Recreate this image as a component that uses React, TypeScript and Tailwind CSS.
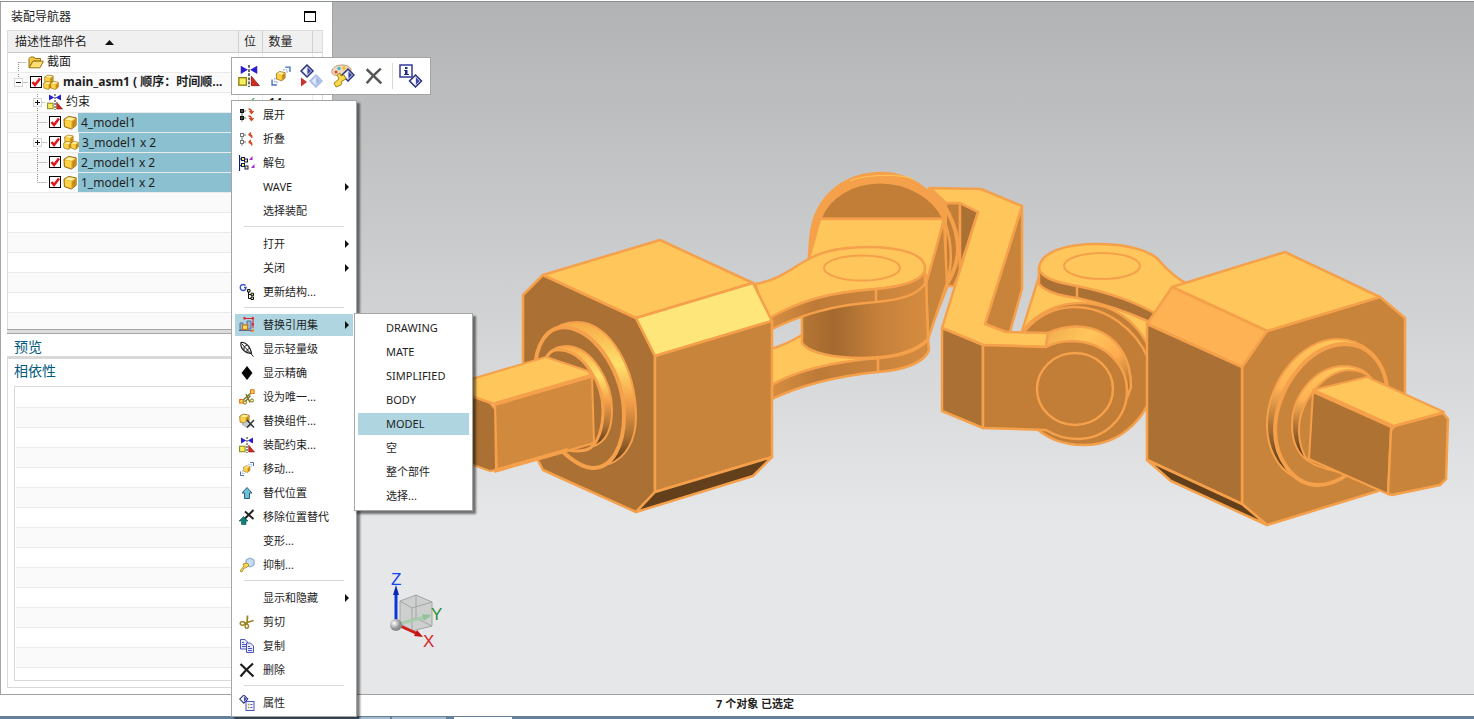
import type { ReactNode } from "react";

interface IconProps {
  className?: string;
}

interface MenuEntry {
  label: string;
  icon?: ReactNode;
  arrow?: boolean;
  active?: boolean;
}

interface TreeRow {
  label: string;
  indent: "root" | "asm" | "group" | "part";
  icon: ReactNode;
  toggle?: "+" | "-";
  checkable?: boolean;
  selected?: boolean;
  bold?: boolean;
  count?: string;
  last?: boolean;
}

/* ---------- icons ---------- */

function Cube({ x = 0, y = 0, s = 1 }: { x?: number; y?: number; s?: number }) {
  return (
    <g transform={`translate(${x} ${y}) scale(${s})`}>
      <path d="M1 4.5 6 1.5 14 3 14 11 9 15 1.5 12.5Z" fill="#f0b723" stroke="#8a6410" strokeWidth="1" />
      <path d="M2 4.8 6 2.3 13 3.5 9.2 6.2Z" fill="#fff0a8" />
      <path d="M2 5.6 8.6 7 8.6 13.8 2.3 11.8Z" fill="#fcd34a" />
      <path d="M9.8 7 13.3 4.4 13.3 10.6 9.8 13.6Z" fill="#c48a18" />
    </g>
  );
}

function PartIcon() {
  return (
    <svg className="size-[15px] shrink-0" viewBox="0 0 16 16">
      <Cube />
    </svg>
  );
}

function AssemblyIcon() {
  return (
    <svg className="size-4 shrink-0" viewBox="0 0 16 16">
      <Cube s={0.65} x={1} />
      <Cube s={0.6} x={0} y={6.5} />
      <Cube s={0.6} x={7} y={6.5} />
    </svg>
  );
}

function FolderIcon() {
  return (
    <svg className="size-4 shrink-0" viewBox="0 0 16 16">
      <path d="M1 13.5V4.5L2.5 3H6L7 4.5H12.5V7H5Z" fill="#f6c944" stroke="#9a7413" />
      <path d="M1.2 13.8 5 7.2H15.4L12 13.8Z" fill="#ffdf73" stroke="#9a7413" />
    </svg>
  );
}

function ConstraintIcon({ className = "size-4 shrink-0" }: IconProps) {
  return (
    <svg className={className} viewBox="0 0 16 16">
      <path d="M2 .5 7.2 3.5 2 6.5ZM14 .5 8.8 3.5 14 6.5Z" fill="#2a1ed0" />
      <path d="M8 0V16" stroke="#222" strokeDasharray="2 1" />
      <rect fill="#f7ee62" height="5.5" stroke="#8c8212" width="5.5" x=".6" y="9.2" />
      <path d="M9.7 8.2 15.5 15H9.7Z" fill="#d22b20" stroke="#8a1711" strokeWidth=".6" />
    </svg>
  );
}

function ExpandIcon({ collapse }: { collapse?: boolean }) {
  return (
    <svg className="size-4" viewBox="0 0 16 16">
      <g fill="#fff" stroke={collapse ? "#777" : "#111"}>
        <rect height="3" width="3" x="1.5" y="2.5" />
        <rect height="3" width="3" x="1.5" y="9.5" />
      </g>
      {!collapse && <path d="M3 2V6M1 4H5M3 9V13M1 11H5" stroke="#111" />}
      <path d="M3 6V9M5 4H7M5 11H7M3 13V14.5" fill="none" stroke="#666" />
      {collapse ? (
        <path d="M12.500 7C13.500 5 12.500 3.500 10 3.500M12 1.500 10 3.500 12 5.500M12.500 14.500C13.500 12.500 12.500 11 10 11M12 9 10 11 12 13" fill="none" stroke="#d8441c" strokeWidth="1.300" />
      ) : (
        <path d="M9.500 2C12 2 12.500 3 12.500 5M10.500 4 12.500 6.500 14.500 4M9.500 9C12 9 12.500 10 12.500 12M10.500 11 12.500 13.500 14.500 11" fill="none" stroke="#d8441c" strokeWidth="1.300" />
      )}
    </svg>
  );
}

function UnpackIcon() {
  return (
    <svg className="size-4" viewBox="0 0 16 16">
      <path d="M.5 0V16M.5 4H2M.5 10.500H2" stroke="#111c80" strokeWidth="1.200" />
      <g fill="#fff36b" stroke="#111c60">
        <rect height="3" width="3" x="2.500" y="2.500" />
        <rect height="3" width="3" x="5.500" y="4" />
        <rect height="3" width="3" x="2.500" y="8.500" />
        <rect height="3" width="3" x="6" y="11" />
      </g>
      <path d="M10 5 13.500 1V5ZM12 13 15.500 9V13Z" fill="#a323c4" />
    </svg>
  );
}

function UpdateStructureIcon() {
  return (
    <svg className="size-4" viewBox="0 0 16 16">
      <path d="M6.500 1.500A3 3 0 1 0 6.500 5.500L7 3.500H5" fill="none" stroke="#3450c4" strokeWidth="1.400" />
      <path d="M9.500 6V14.500H12M9.500 10.500H12" fill="none" stroke="#111" />
      <path d="M8.500 5.500H11V8H8.500ZM12 9.200H14.500V11.700H12ZM12 13H14.500V15.500H12Z" fill="#cdd76a" stroke="#111" />
    </svg>
  );
}

function RefSetIcon() {
  return (
    <svg className="size-4" viewBox="0 0 16 16">
      <path d="M5.500 1.500H14V11" fill="none" stroke="#d9242b" />
      <path d="M4.500 0h2v2.500h-2zM12.800 0h2v2.500h-2zM12.800 6h2v2.500h-2z" fill="#d9242b" />
      <path d="M1 6H4V13H1ZM8 4H12V12H8Z" fill="#9db6d2" stroke="#5a6898" />
      <path d="M0 13.500H13" stroke="#5a6898" />
      <rect fill="#ffe569" height="4.500" stroke="#c47b1c" strokeWidth="1.300" width="5" x="3.500" y="8" />
      <path d="M11 15 14.500 11.500 15 14.500Z" fill="#ef7a1a" />
    </svg>
  );
}

function FeatherIcon() {
  return (
    <svg className="size-4" viewBox="0 0 16 16">
      <path d="M2 1.500C6 .5 11.500 5 12.500 12.500 6.500 12.500 1 8 2 1.500Z" fill="#fff" stroke="#222" strokeWidth="1.200" />
      <path d="M2.500 2.500 14.500 15.500M5 5.500V9.500M8 8.500V12M5.500 5.500 8 4M8.500 8.500 11 7" fill="none" stroke="#222" />
    </svg>
  );
}

function DiamondIcon() {
  return (
    <svg className="size-4" viewBox="0 0 16 16">
      <path d="M8 1 13.500 8 8 15 2.500 8Z" fill="#050505" />
    </svg>
  );
}

function UniqueIcon() {
  return (
    <svg className="size-4" viewBox="0 0 16 16">
      <path d="M2.500 12.500 13 3M7 5 11 13.500M11.500 6.500 6 13" stroke="#77742a" strokeWidth="1.400" />
      <g fill="#ffd34a" stroke="#e0701c">
        <rect height="3.600" width="3.600" x=".6" y="10.500" />
        <rect height="3.600" width="3.600" x="11.500" y=".8" />
      </g>
      <circle cx="6" cy="13.500" fill="#fff4a0" r="1.600" stroke="#77742a" />
      <circle cx="13" cy="11.500" fill="#fff4a0" r="1.600" stroke="#77742a" />
    </svg>
  );
}

function ReplaceIcon() {
  return (
    <svg className="size-4" viewBox="0 0 16 16">
      <Cube s={0.72} />
      <path d="M3 11 8 8 13 12 8 14.500Z" fill="#c3cdd4" stroke="#78838b" strokeWidth=".6" />
      <path d="M8 7 15 14.500M15 7 8 14.500" stroke="#333" strokeWidth="1.500" />
    </svg>
  );
}

function MoveIcon({ className = "size-4" }: IconProps) {
  return (
    <svg className={className} viewBox="0 0 16 16">
      <Cube s={0.5} x={4} y={4} />
      <path d="M11 1.500H14.500V5M1.500 10.500V14.500H5" fill="none" stroke="#4a6fc0" />
      <path d="M9.500 3.500H12.500V6M3.500 9.500V12.500H6" fill="none" stroke="#8da7dc" strokeDasharray="1 1" />
    </svg>
  );
}

function OverrideIcon() {
  return (
    <svg className="size-4" viewBox="0 0 16 16">
      <path d="M8 2.500 13 8H10.500V13.500H5.500V8H3Z" fill="#70bfd2" stroke="#275c82" />
    </svg>
  );
}

function RemoveOverrideIcon() {
  return (
    <svg className="size-4" viewBox="0 0 16 16">
      <path d="M4.500 7.500 9 12H7V15.500H2.500V12H0Z" fill="#128078" stroke="#0a5650" strokeWidth=".6" />
      <path d="M6 2.500 14.500 10M14.500 1 6 9.500" stroke="#222" strokeWidth="1.900" />
    </svg>
  );
}

function SuppressIcon() {
  return (
    <svg className="size-4" viewBox="0 0 16 16">
      <path d="M7 3 11 1 15 3V8L11 10 7 8Z" fill="#c4dcf5" stroke="#7f9dc6" />
      <path d="M1 14 5 9 4 7 8 6 10 8 7 11 5 11 3 15Z" fill="#fdd94c" stroke="#a3801a" strokeWidth=".8" />
    </svg>
  );
}

function ScissorsIcon() {
  return (
    <svg className="size-4" viewBox="0 0 16 16">
      <path d="M8.500 1.500 8 10M14.500 6.500 5 9.500" stroke="#9c8324" strokeWidth="1.800" />
      <ellipse cx="3.500" cy="9.500" fill="#fff" rx="2.300" ry="1.700" stroke="#9c8324" strokeWidth="1.400" />
      <ellipse cx="7.800" cy="12.300" fill="#fff" rx="1.700" ry="2" stroke="#9c8324" strokeWidth="1.400" />
    </svg>
  );
}

function CopyIcon() {
  return (
    <svg className="size-4" viewBox="0 0 16 16">
      <path d="M1.500 1.500H6L8.500 4V11H1.500ZM3 4.500H5M3 6.500H7M3 8.500H7" fill="#e6ebff" stroke="#4d55bd" />
      <path d="M7.500 5H11.500L14.500 8V14.500H7.500ZM9 8.500H11M9 10.500H13M9 12.500H13" fill="#e6ebff" stroke="#4d55bd" />
    </svg>
  );
}

function CrossIcon({ className = "size-4", color = "#1c1c1c" }: IconProps & { color?: string }) {
  return (
    <svg className={className} viewBox="0 0 16 16">
      <path d="M1.500 2 14.500 14.500M14 1.500C10 5 5 10 1.500 14.500" fill="none" stroke={color} strokeWidth="2.200" />
    </svg>
  );
}

function DiamondMark({ x, y, pale }: { x: number; y: number; pale?: boolean }) {
  return (
    <g transform={`translate(${x} ${y})`}>
      <path d="M7 1 13 7 7 13 1 7Z" fill={pale ? "#c3d3f4" : "#d9def0"} stroke={pale ? "#a9bce6" : "#2d347e"} strokeWidth="1.500" />
      <path d="M6.500 3.500V10.500L3.200 7Z" fill={pale ? "#e6eefc" : "#fff"} />
      <path d="M7.500 3.500V10.500L11 7Z" fill={pale ? "#9db4e4" : "#3c45a0"} />
    </g>
  );
}

function PropertiesIcon() {
  return (
    <svg className="size-4" viewBox="0 0 16 16">
      <g transform="scale(.68)">
        <DiamondMark x={0} y={-1} />
      </g>
      <rect fill="#f3f5ff" height="9" stroke="#4d55bd" width="8" x="7" y="6.500" />
      <path d="M9 9.500H10.500M9 12.500H10.500" stroke="#c49a28" strokeWidth="1.500" />
      <path d="M11.500 9.500H13.500M11.500 12.500H13.500" stroke="#4d55bd" />
    </svg>
  );
}

function SwapSetIcon() {
  return (
    <svg className="size-6" viewBox="0 0 24 24">
      <DiamondMark x={0} y={0} />
      <DiamondMark pale x={9} y={10} />
      <path d="M1 13.500 7 18 1 22.500Z" fill="#c8322b" />
    </svg>
  );
}

function PaletteIcon() {
  return (
    <svg className="size-6" viewBox="0 0 24 24">
      <path d="M11 1C4 1 0 5 1 9 2 12 6 11 9 12 14 13 20 10 20 6 20 3 16 1 11 1Z" fill="#f2d9bd" stroke="#b79875" />
      <circle cx="8" cy="4.500" fill="#42b9dc" r="1.700" />
      <circle cx="13" cy="4" fill="#f0be22" r="1.700" />
      <circle cx="5" cy="8" fill="#d8432c" r="1.500" />
      <g transform="translate(10 4)">
        <DiamondMark x={0} y={0} />
      </g>
      <path d="M13 11 10 12 9 9 6 11 8 15 3 19 5 23 10 21 11 17 15 15Z" fill="#fbd94f" stroke="#a58318" />
    </svg>
  );
}

function InfoIcon() {
  return (
    <svg className="size-6" viewBox="0 0 24 24">
      <rect fill="#fff" height="12" stroke="#33399a" strokeWidth="1.500" width="12" x="1" y="1" />
      <path d="M6 3H8.500V5H6ZM5 6H8.500V10H10V11H5V10H6V7H5Z" fill="#252a78" />
      <DiamondMark x={9.500} y={10} />
    </svg>
  );
}

/* ---------- data ---------- */

const TREE: TreeRow[] = [
  { label: "截面", indent: "root", icon: <FolderIcon /> },
  { label: "main_asm1 ( 顺序：时间顺...", indent: "asm", icon: <AssemblyIcon />, toggle: "-", checkable: true, bold: true },
  { label: "约束", indent: "group", icon: <ConstraintIcon />, toggle: "+", count: "14" },
  { label: "4_model1", indent: "part", icon: <PartIcon />, checkable: true, selected: true },
  { label: "3_model1 x 2", indent: "part", icon: <AssemblyIcon />, toggle: "+", checkable: true, selected: true },
  { label: "2_model1 x 2", indent: "part", icon: <PartIcon />, checkable: true, selected: true },
  { label: "1_model1 x 2", indent: "part", icon: <PartIcon />, checkable: true, selected: true, last: true },
];

const MENU: MenuEntry[][] = [
  [
    { label: "展开", icon: <ExpandIcon /> },
    { label: "折叠", icon: <ExpandIcon collapse /> },
    { label: "解包", icon: <UnpackIcon /> },
    { label: "WAVE", arrow: true },
    { label: "选择装配" },
  ],
  [
    { label: "打开", arrow: true },
    { label: "关闭", arrow: true },
    { label: "更新结构...", icon: <UpdateStructureIcon /> },
  ],
  [
    { label: "替换引用集", icon: <RefSetIcon />, arrow: true, active: true },
    { label: "显示轻量级", icon: <FeatherIcon /> },
    { label: "显示精确", icon: <DiamondIcon /> },
    { label: "设为唯一...", icon: <UniqueIcon /> },
    { label: "替换组件...", icon: <ReplaceIcon /> },
    { label: "装配约束...", icon: <ConstraintIcon /> },
    { label: "移动...", icon: <MoveIcon /> },
    { label: "替代位置", icon: <OverrideIcon /> },
    { label: "移除位置替代", icon: <RemoveOverrideIcon /> },
    { label: "变形..." },
    { label: "抑制...", icon: <SuppressIcon /> },
  ],
  [
    { label: "显示和隐藏", arrow: true },
    { label: "剪切", icon: <ScissorsIcon /> },
    { label: "复制", icon: <CopyIcon /> },
    { label: "删除", icon: <CrossIcon /> },
  ],
  [{ label: "属性", icon: <PropertiesIcon /> }],
];

const REFERENCE_SETS = ["DRAWING", "MATE", "SIMPLIFIED", "BODY", "MODEL", "空", "整个部件", "选择..."];

/* ---------- navigator ---------- */

const GUIDE_WIDTH = { root: 20, asm: 22, group: 39, part: 41 };

function TreeGuide({ row }: { row: TreeRow }) {
  const width = GUIDE_WIDTH[row.indent];
  const deep = row.indent === "group" || row.indent === "part";
  const x = deep ? 29.5 : 10.5;
  const top = row.indent === "root" ? 10 : 0;
  const bottom = row.last || row.indent === "asm" ? 10 : 20;
  const drawing = (
    <svg className="block" height="20" width={width}>
      <path
        d={`M${x} ${top}V${bottom}M${x} 10.5H${width - 2}`}
        fill="none"
        stroke="#8c8c8c"
        strokeDasharray="1 1"
      />
      {row.toggle && (
        <>
          <rect fill="#fff" height="8" stroke="#d5d5d5" width="8" x={x - 4} y="6.5" />
          <path d={`M${x - 2.5} 10.5H${x + 2.5}`} stroke="#111" />
          {row.toggle === "+" && <path d={`M${x} 8V13`} stroke="#111" />}
        </>
      )}
    </svg>
  );
  if (!row.toggle) return <span className="shrink-0">{drawing}</span>;
  return (
    <button aria-label={`${row.toggle} ${row.label}`} className="shrink-0">
      {drawing}
    </button>
  );
}

function TreeCheck({ label }: { label: string }) {
  return (
    <label className="relative block size-3 shrink-0">
      <input
        aria-label={label}
        className="block size-3 appearance-none border border-black bg-white"
        defaultChecked
        type="checkbox"
      />
      <svg className="pointer-events-none absolute inset-0 size-3" viewBox="0 0 12 12">
        <path d="M2.500 6 5 9 10 2.500" fill="none" stroke="#e0161b" strokeWidth="2.600" />
      </svg>
    </label>
  );
}

function AssemblyTable() {
  return (
    <table className="w-full table-fixed border-collapse text-left text-xs text-[#1e1e1e]">
      <colgroup>
        <col />
        <col className="w-6" />
        <col className="w-[50px]" />
        <col className="w-2.5" />
      </colgroup>
      <thead>
        <tr className="h-[21px] border-b border-[#c8c8c8] bg-[#f0f0f0] leading-[18px]">
          <th className="pb-0 pl-[7px] pt-0.5 font-normal">
            <span className="flex items-center gap-[18px]">
              描述性部件名
              <svg className="h-[5px] w-[9px]" viewBox="0 0 9 5">
                <path d="M0 5 4.500 0 9 5Z" fill="#111" />
              </svg>
            </span>
          </th>
          <th className="border-l border-[#d0d0d0] p-0 pt-0.5 text-center font-normal">位</th>
          <th className="border-l border-[#d0d0d0] pb-0 pl-1.5 pt-0.5 font-normal">数量</th>
          <th className="border-l border-[#d0d0d0] p-0" />
        </tr>
      </thead>
      <tbody>
        {TREE.map((row) => (
          <tr className="h-5 border-b border-[#ebebeb] even:bg-[#fafafa]" key={row.label}>
            <td className="p-0">
              <div className="flex h-[19px] items-center overflow-hidden whitespace-nowrap">
                <TreeGuide row={row} />
                {row.checkable && (
                  <>
                    <TreeCheck label={row.label} />
                    <span className={row.bold ? "w-px shrink-0" : "w-0.5 shrink-0"} />
                  </>
                )}
                {row.icon}
                <span className={row.selected ? "grow bg-[#8ac0d0] pl-[3px] leading-[19px]" : row.bold ? "pl-1 font-bold" : "pl-[3px]"}>
                  {row.label}
                </span>
              </div>
            </td>
            <td className="border-l border-[#ebebeb] p-0 text-center leading-[19px] text-[#12a321]">{row.count && "✓"}</td>
            <td className="border-l border-[#ebebeb] py-0 pl-1.5 font-bold leading-[19px]">{row.count}</td>
            <td className="border-l border-[#ebebeb] p-0" />
          </tr>
        ))}
        {Array.from({ length: 7 }).map((_, i) => (
          <tr className="h-5 border-b border-[#ebebeb] even:bg-[#fafafa]" key={i}>
            <td className="p-0" />
            <td className="border-l border-[#ebebeb] p-0" />
            <td className="border-l border-[#ebebeb] p-0" />
            <td className="border-l border-[#ebebeb] p-0" />
          </tr>
        ))}
      </tbody>
    </table>
  );
}

function Navigator() {
  return (
    <aside className="flex w-[333px] shrink-0 flex-col border-x border-[#a5a5a5] bg-white">
      <header className="flex h-7 items-center justify-between pl-2.5 pr-4 pt-px text-xs text-[#1e1e1e]">
        <h1>装配导航器</h1>
        <button aria-label="最大化" className="h-[11px] w-3 border border-t-2 border-black" />
      </header>
      <div className="ml-1.5 mr-[9px] h-[299px] overflow-hidden border border-b-0 border-[#dcdcdc]">
        <AssemblyTable />
      </div>
      <div className="ml-1.5 h-[5px] border-y border-[#a5a5a5] bg-[#dcdcdc]" />
      <h2 className="ml-1.5 h-[22px] pl-[7px] text-sm leading-[26px] text-[#005a80]">预览</h2>
      <div className="mb-1.5 ml-1.5 mr-[9px] flex grow flex-col border border-t-[3px] border-[#d9d9d9] px-1.5 pb-1.5">
        <h2 className="h-[27px] text-sm leading-6 text-[#005a80]">相依性</h2>
        <div className="h-[295px] overflow-hidden border border-[#d9d9d9] px-px">
          <div className="h-[21px] border-b border-[#ebebeb]" />
          {Array.from({ length: 14 }).map((_, i) => (
            <div className="h-5 border-b border-[#ebebeb] even:bg-[#fafafa]" key={i} />
          ))}
        </div>
      </div>
    </aside>
  );
}

/* ---------- model view ---------- */

function Triad() {
  return (
    <g>
      <path d="M400 601 416 595 432 602V626L412 631 400 623Z" fill="#c4c8c6" fillOpacity=".75" stroke="#a2a5a3" />
      <path d="M400 601 412 608 432 602M412 608V631M416 595V618L400 623M416 618 432 626" fill="none" stroke="#a2a5a3" />
      <path d="M402 623 430 616" stroke="#a7cdaa" strokeWidth="3" />
      <path d="M422 614 431 615 424 621Z" fill="#94c399" />
      <path d="M396 622V592" stroke="#0b38d2" strokeWidth="3" />
      <path d="M396 585 399 595H393Z" fill="#0b2bb0" />
      <path d="M398 625 418 634" stroke="#d31b1b" strokeWidth="3" />
      <path d="M414 636 423 637 417 630Z" fill="#c01414" />
      <circle cx="396" cy="625" fill="url(#ball)" r="6" />
      <g fontFamily="Liberation Sans, sans-serif" fontSize="17">
        <text fill="#1743f0" x="391" y="585">Z</text>
        <text fill="#2c9138" x="431" y="620">Y</text>
        <text fill="#d42626" x="423" y="647">X</text>
      </g>
    </g>
  );
}

function Model() {
  return (
    <svg
      aria-label="main_asm1"
      className="absolute inset-0 size-full"
      preserveAspectRatio="xMinYMin meet"
      role="img"
      viewBox="333 2 1141 692"
    >
      <defs>
        <linearGradient id="pin" x1="0" x2="1">
          <stop offset="0" stopColor="#b67735" />
          <stop offset=".25" stopColor="#a3692e" />
          <stop offset=".6" stopColor="#c5803a" />
          <stop offset="1" stopColor="#d78d40" />
        </linearGradient>
        <linearGradient id="rim" x1="0" x2="0" y1="0" y2="1">
          <stop offset="0" stopColor="#f7aa48" />
          <stop offset=".3" stopColor="#ffe06c" />
          <stop offset=".55" stopColor="#f5a04a" />
          <stop offset=".8" stopColor="#ab7033" />
          <stop offset="1" stopColor="#5a3816" />
        </linearGradient>
        <linearGradient id="rimRight" x1="0" x2="0" y1="0" y2="1">
          <stop offset="0" stopColor="#ffc65b" />
          <stop offset=".35" stopColor="#ffb254" />
          <stop offset=".65" stopColor="#ab7033" />
          <stop offset="1" stopColor="#4e3013" />
        </linearGradient>
        <linearGradient id="knuckle" x1="0" x2="1" y1="0" y2=".8">
          <stop offset="0" stopColor="#f0a94e" />
          <stop offset=".35" stopColor="#ffc65b" />
          <stop offset=".7" stopColor="#ffad50" />
          <stop offset="1" stopColor="#b67735" />
        </linearGradient>
        <linearGradient id="band" x1="0" x2="1">
          <stop offset="0" stopColor="#d88e41" />
          <stop offset=".3" stopColor="#bd7a37" />
          <stop offset="1" stopColor="#d48b40" />
        </linearGradient>
        <radialGradient cx=".35" cy=".35" id="ball">
          <stop offset="0" stopColor="#fff" />
          <stop offset="1" stopColor="#8d8d8d" />
        </radialGradient>
      </defs>

      <g stroke="#f5a04a" strokeLinejoin="round" strokeWidth="2.500">
        {/* round flange behind the left hinge */}
        <path d="M808 262C810 255 809 240 812 227 819 193 848 173 881 173 920 173 948 205 957 242 960 256 954 270 948 285L930 330Z" fill="#f5a04a" />
        <path d="M946 203H960V272L954 286H945Z" fill="#c27d37" />
        <path d="M960 203 978 212 960 268Z" fill="#ab7033" />
        <path d="M928 188C944 200 957 224 958 248 958 262 953 274 947 284" fill="none" strokeWidth="4" />
        <path d="M850 181C860 175 900 173 913 179" fill="none" stroke="#ffc65b" strokeWidth="1" />
        <path d="M820 219C828 197 852 182 880 182 909 182 935 198 944 219Z" fill="#c27d37" strokeWidth="3" />
        <path d="M820 219H944L926 290 808 262Z" fill="#ffc65b" />
        <path d="M944 220 947 283 928 339 926 284Z" fill="#c9843b" />
        <path d="M945 222C951 240 953 262 947 282" fill="none" />

        {/* left hinge, lower plate, pin, upper plate */}
        <path d="M770 349C782 346 792 341 802 335L850 357 880 358C840 361 797 371 770 386Z" fill="#ffc65b" />
        <path d="M770 386C800 368 840 361 880 358 905 356 920 349 928 340L929 350C925 362 905 370 878 372 838 376 800 385 770 400Z" fill="url(#band)" />
        <path d="M878 358V372" />
        <path d="M802 305V343C808 353 835 358 862 358 893 358 915 352 928 339L926 275Z" fill="url(#pin)" />
        <path d="M755 284C780 280 795 266 807 260 822 251 843 247 867 247 903 247 925 255 925 268 925 281 900 287 876 289 832 292 800 300 768 320Z" fill="#ffc65b" />
        <path d="M768 319C800 300 832 292 876 289 900 287 925 281 925 268V284C915 297 896 300 876 302 832 305 800 315 768 331Z" fill="url(#band)" />
        <path d="M876 289V302" />
        <ellipse cx="862" cy="268" fill="none" rx="38" ry="12.500" strokeWidth="2" />

        {/* left body */}
        <path d="M523 295 543 275 636 318 655 356V492L636 512 543 470 523 432Z" fill="#ab7033" />
        <path d="M543 275 660 240 753 283 636 318Z" fill="#ffc65b" />
        <path d="M636 318 753 283 772 321 655 356Z" fill="#ffe67a" />
        <path d="M655 356 772 321V457L655 492Z" fill="#c9843b" />
        <path d="M655 492 772 457 753 476 636 512Z" fill="#633f1c" />

        {/* left collars */}
        <path d="M535 368C537 338 555 322 577 322 611 322 636 370 636 417 636 440 626 458 609 464 585 450 540 400 535 368Z" fill="url(#rim)" strokeWidth="2" />
        <path d="M535 372C535 344 547 327 565 327 598 331 624 376 624 416 624 446 612 468 593 468 583 468 573 461 563 452Z" fill="#ab7033" strokeWidth="4" />
        <path d="M546 357C550 350 558 346 568 346 592 348 612 380 612 410 612 430 605 442 594 446L570 400Z" fill="url(#rim)" strokeWidth="2" />
        <path d="M546 360C548 352 554 349 561 350 584 352 603 384 603 410 603 430 597 442 593 445 590 451 578 452 568 450Z" fill="#ab7033" strokeWidth="3" />

        {/* left shaft */}
        <path d="M465 381 546 357 588 371 592 377 495 404 465 394Z" fill="#ffc65b" strokeWidth="2" />
        <path d="M495 404 592 376 594 443 497 471Z" fill="#d1893d" strokeWidth="2" />
        <path d="M465 394 490 403 495 409 496 470 490 471 465 462Z" fill="#ab7033" strokeWidth="2" />
        <path d="M495 404 591 376" strokeWidth="4" />
        <path d="M494 471 568 450" strokeWidth="4" />

        {/* middle crank, back part */}
        <path d="M1041 270 1022 331 1040 340 1148 350V318Z" fill="#ffc65b" />
        <path d="M1022 331C1038 312 1060 302 1084 303 1124 305 1154 337 1154 375 1154 414 1122 445 1084 445 1063 445 1050 439 1038 430Z" fill="#c27d37" />
        <path d="M1024 332C1037 316 1055 307 1074 307 1107 307 1136 330 1148 358" fill="none" />
        <path d="M1022 206V289L1010 332H1005L985 324Z" fill="#c9843b" />
        <path d="M930 188 981 189 1022 206 985 324 1006 332 1048 333 1046 347 983 345 942 328 978 212 960 203 946 203Z" fill="#ffc65b" />
        <path d="M942 328 983 345V428L942 411Z" fill="#ab7033" />
        <path d="M1046 347 1048 333C1084 316 1131 332 1131 387L1127 398 1080 380Z" fill="url(#knuckle)" />
        <path d="M983 345 1046 347C1055 342 1064 341 1073 341 1104 342 1127 364 1127 391 1127 418 1105 439 1077 439 1066 439 1056 436 1046 430L983 428Z" fill="#c27d37" />
        <ellipse cx="1075" cy="389" fill="none" rx="38" ry="36" />

        {/* right hinge plate */}
        <path d="M1039 267V284C1047 293 1062 296 1077 298 1105 304 1128 312 1152 323L1156 308 1077 280Z" fill="#ab7033" />
        <path d="M1039 268C1041 251 1067 244 1097 244 1126 244 1146 250 1157 258 1166 269 1176 279 1190 285L1158 315C1136 302 1106 292 1077 286 1060 283 1041 279 1039 268Z" fill="#ffc65b" />
        <path d="M1077 286V298" />
        <ellipse cx="1102" cy="266" fill="none" rx="38" ry="13" strokeWidth="2" />

        {/* right body */}
        <path d="M1267 331 1380 297 1405 318V458L1378 491 1267 525 1242 504V367Z" fill="#c9843b" />
        <path d="M1172 287 1285 252 1380 297 1267 331Z" fill="#ffc65b" />
        <path d="M1172 287 1267 331 1242 367 1147 324Z" fill="#ffb254" />
        <path d="M1147 324 1242 367V504L1147 460Z" fill="#ab7033" />
        <path d="M1147 460 1242 504 1267 525 1171 481Z" fill="#633f1c" />

        {/* right collars */}
        <path d="M1387 387C1384 355 1361 339 1337 339 1302 339 1267 380 1267 425 1267 447 1277 468 1293 476Z" fill="url(#rimRight)" strokeWidth="2" />
        <path d="M1387 387C1384 360 1366 344 1345 344 1308 344 1275 390 1275 430 1275 458 1293 485 1318 485 1330 485 1340 480 1348 474Z" fill="#c9843b" strokeWidth="4" />
        <path d="M1371 378C1364 369 1354 366 1343 366 1315 367 1292 395 1292 425 1292 443 1299 456 1309 461L1340 420Z" fill="url(#rimRight)" strokeWidth="2" />
        <path d="M1371 378C1366 373 1358 370 1348 370 1325 372 1299 400 1299 430 1299 445 1304 458 1310 462 1320 469 1330 469 1342 473L1360 420Z" fill="#c9843b" strokeWidth="2" />

        {/* right shaft */}
        <path d="M1313 390 1367 377 1444 412 1393 426Z" fill="#ffc65b" strokeWidth="2" />
        <path d="M1313 392 1391 427 1388 494 1309 459Z" fill="#ae7233" strokeWidth="2" />
        <path d="M1391 430 1395 426 1443 413 1448 419 1446 479 1440 485 1392 495 1388 494Z" fill="#c9843b" />
        <path d="M1314 391 1392 426" strokeWidth="4" />
      </g>
      <Triad />
    </svg>
  );
}

/* ---------- overlays ---------- */

function ContextMenu() {
  return (
    <div
      className="absolute left-[231px] top-[100px] z-10 w-[126px] border border-[#a5a5a5] bg-white px-[3px] pb-px pt-0.5 shadow-[3px_3px_2px_rgba(0,0,0,0.5)]"
      role="menu"
    >
      {MENU.map((group, i) => (
        <div
          className={
            i > 0
              ? "bg-[linear-gradient(#d8d8d8,#d8d8d8)] bg-[length:100px_1px] bg-[position:9px_3px] bg-no-repeat pt-[9px]"
              : ""
          }
          key={i}
          role="group"
        >
          {group.map((item) => (
            <div className="py-px" key={item.label}>
              <button
                className={
                  item.active
                    ? "flex h-[22px] w-full items-center bg-[#afd6e0] px-1"
                    : "flex h-[22px] w-full items-center px-1 hover:bg-[#afd6e0]"
                }
                role="menuitem"
              >
                <span className="w-6 shrink-0">{item.icon}</span>
                <span className="grow whitespace-nowrap text-left">{item.label}</span>
                {item.arrow && (
                  <svg className="h-2 w-1 shrink-0" viewBox="0 0 4 8">
                    <path d="M0 0 4 4 0 8Z" fill="#111" />
                  </svg>
                )}
              </button>
            </div>
          ))}
        </div>
      ))}
    </div>
  );
}

function ReferenceSetMenu() {
  return (
    <div
      className="absolute left-[354px] top-[313px] z-20 w-[119px] border border-[#a5a5a5] bg-white px-[3px] py-0.5 shadow-[3px_3px_2px_rgba(0,0,0,0.5)]"
      role="menu"
    >
      {REFERENCE_SETS.map((name) => (
        <div className="py-px" key={name}>
          <button
            className={
              name === "MODEL"
                ? "block h-[22px] w-full bg-[#afd6e0] pl-7 text-left"
                : "block h-[22px] w-full pl-7 text-left hover:bg-[#afd6e0]"
            }
            role="menuitem"
          >
            {name}
          </button>
        </div>
      ))}
    </div>
  );
}

function QuickToolbar() {
  return (
    <div
      className="absolute left-[231px] top-[57px] z-20 flex h-[38px] w-[200px] items-center border border-[#a5a5a5] bg-white pl-1.5"
      role="toolbar"
    >
      <div className="flex items-center gap-[7px]">
        <button aria-label="装配约束" className="size-6">
          <ConstraintIcon className="size-[22px]" />
        </button>
        <button aria-label="移动" className="flex size-6 items-center justify-center">
          <MoveIcon className="size-[22px]" />
        </button>
        <button aria-label="替换引用集" className="size-6">
          <SwapSetIcon />
        </button>
        <button aria-label="编辑显示" className="size-6">
          <PaletteIcon />
        </button>
        <button aria-label="删除" className="flex size-6 items-center justify-center">
          <CrossIcon className="size-[18px]" color="#555" />
        </button>
      </div>
      <span className="mx-1.5 h-[26px] w-px bg-[#d8d8d8]" />
      <button aria-label="信息" className="size-6">
        <InfoIcon />
      </button>
    </div>
  );
}

export default function App() {
  return (
    <div className="relative flex min-h-screen flex-col bg-white font-['Noto_Sans','Noto_Sans_CJK_SC',sans-serif] text-[11px] leading-[22px] text-[#1e1e1e]">
      <div className="flex grow border-b border-[#a0a0a0] pt-px">
        <div className="flex grow border-t border-[#8a8f94]">
          <Navigator />
          <main className="relative grow bg-[linear-gradient(#b2b3b4,#e6e7e9_520px)]">
            <Model />
          </main>
        </div>
      </div>
      <footer>
        <p className="h-[21px] pl-9 text-center font-bold leading-[18px]">7 个对象 已选定</p>
        <div className="flex h-[3px] gap-0.5 bg-[#64809a] pl-[359px] pt-px">
          <span className="w-[31px] bg-[#a9bccb]" />
          <span className="w-[54px] bg-[#a9bccb]" />
          <span className="ml-1.5 w-[58px] bg-white" />
        </div>
      </footer>
      <QuickToolbar />
      <ContextMenu />
      <ReferenceSetMenu />
    </div>
  );
}
